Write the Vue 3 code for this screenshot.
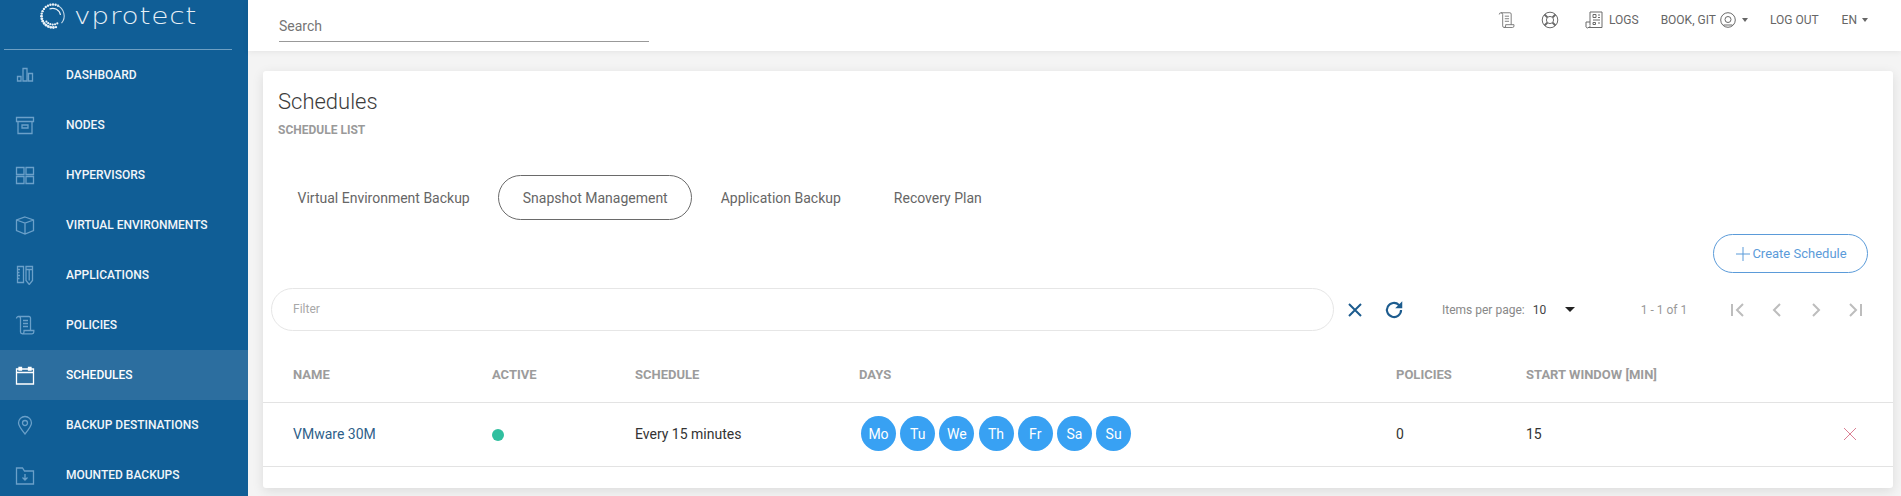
<script setup>
const navItems = [
  { label: 'DASHBOARD', d: 'M2.5 11.5h3.5v4.5H2.5z M8 3.5h4v12.5H8z M13.5 8.5h4v7.5h-4z' },
  { label: 'NODES', d: 'M1.5 2.5h17v4h-17z M3 6.5v12h14v-12 M7 10h6v3H7z' },
  { label: 'HYPERVISORS', d: 'M1.5 2.5h7.5v7H1.5z M11 2.5h7.5v7H11z M1.5 11.5h7.5v7H1.5z M11 11.5h7.5v7H11z' },
  { label: 'VIRTUAL ENVIRONMENTS', d: 'M10 2l8.5 3v10.5L10 19l-8.5-3.5V5z M1.5 5L10 8l8.5-3 M10 8v11' },
  { label: 'APPLICATIONS', d: 'M2.5 1.5h6v16h-6z M2.5 4.5H5 M2.5 7.5h2 M2.5 10.5H5 M2.5 13.5h2 M11 1.5h6.5v14l-3.25 4-3.25-4z M11 4.5h6.5 M14.2 4.5v11' },
  { label: 'POLICIES', d: 'M1.5 3.5a2 2 0 0 1 2-2H14a1.5 1.5 0 0 1 1.5 1.5v12.5 M3.5 1.5a2 2 0 0 1 2 2V17a1.8 1.8 0 0 0 1.8 1.8H17a1.8 1.8 0 0 0 1.8-1.8v-1.5H9V17a1.8 1.8 0 0 1-1.8 1.8 M8 5.5h5 M8 8.5h5 M8 11.5h5' },
  { label: 'SCHEDULES', active: true, d: 'M1.5 4h17v15h-17z M1.5 7.5h17 M4 2.500h2.500v2.500H4z M13.500 2.500H16v2.500h-2.500z' },
  { label: 'BACKUP DESTINATIONS', d: 'M10 19C6 14 3.5 11 3.5 8a6.5 6.5 0 0 1 13 0c0 3-2.5 6-6.5 11z M10 5.5a2.5 2.5 0 1 1 0 5 2.5 2.5 0 0 1 0-5z' },
  { label: 'MOUNTED BACKUPS', d: 'M1.5 3h6l2 3h9v13h-17z M10 9v6 M7.5 12.5L10 15l2.5-2.5' }
]

const tabs = ['Virtual Environment Backup', 'Snapshot Management', 'Application Backup', 'Recovery Plan']
const days = ['Mo', 'Tu', 'We', 'Th', 'Fr', 'Sa', 'Su']
const columns = ['NAME', 'ACTIVE', 'SCHEDULE', 'DAYS', 'POLICIES', 'START WINDOW [MIN]']

// dotted ring of the logo: runs from the top round the left side to the bottom
const ringDots = []
for (let a = 75; a <= 300; a += 13) {
  const rad = (a * Math.PI) / 180
  ringDots.push({ x: 13 + 11.5 * Math.cos(rad), y: 13 + 11.5 * Math.sin(rad), r: a > 80 && a < 190 ? 1.4 : 1.2 })
}
for (let a = 60; a <= 140; a += 16) {
  const rad = (a * Math.PI) / 180
  ringDots.push({ x: 13 + 8.6 * Math.cos(rad), y: 13 + 8.6 * Math.sin(rad), r: 1.1 })
}
</script>

<template>
  <div class="app-shell">
    <aside class="sidebar">
      <div class="logo">
        <svg class="logo-mark" width="26" height="26" viewBox="0 0 26 26" fill="none">
          <circle v-for="(dot, i) in ringDots" :key="i" :cx="dot.x" :cy="dot.y" :r="dot.r" fill="#e8f1f7" />
          <path d="M17 2.200a11.500 11.500 0 0 1 4.500 18" stroke="#c4d9e9" stroke-width="1.100" />
          <path d="M9.500 6a8 8 0 0 1 11 6" stroke="#e8f1f7" stroke-width="1.200" />
        </svg>
        <span class="logo-text">vprotect</span>
      </div>
      <nav class="nav">
        <a v-for="item in navItems" :key="item.label" class="nav-item" :class="{ active: item.active }">
          <svg class="nav-icon" width="20" height="20" viewBox="0 0 20 20" fill="none">
            <path :d="item.d" />
          </svg>
          <span>{{ item.label }}</span>
        </a>
      </nav>
    </aside>

    <div class="main">
      <header class="topbar">
        <div class="search">Search</div>
        <div class="top-actions">
          <svg class="top-icon policy" width="17" height="18" viewBox="0 0 20 20" fill="none">
            <path d="M1.500 3.500a2 2 0 0 1 2-2H14a1.500 1.500 0 0 1 1.500 1.500v12.500 M3.500 1.500a2 2 0 0 1 2 2V17a1.800 1.800 0 0 0 1.800 1.800H17a1.800 1.800 0 0 0 1.800-1.800v-1.500H9V17a1.800 1.800 0 0 1-1.800 1.800 M8 5.500h5 M8 8.500h5 M8 11.500h5" />
          </svg>
          <svg class="top-icon help" width="18" height="18" viewBox="0 0 18 18" fill="none">
            <circle cx="9" cy="9" r="7.800" />
            <circle cx="9" cy="9" r="3.600" />
            <path d="M3.500 3.500L6.400 6.400 M14.500 3.500L11.600 6.400 M3.500 14.500L6.400 11.600 M14.500 14.500L11.600 11.600" stroke-width="2" />
          </svg>
          <svg class="top-icon logs" width="18" height="18" viewBox="0 0 18 18" fill="none">
            <path d="M5 14V1h12v15.500H3 M5 14.500a1.500 1.500 0 0 1-1.500 2A1.500 1.500 0 0 1 1 15v-4h4 M8 3.500h3v3H8z M13 4h2 M13 6.500h2 M8 9h7 M8 11.500h2.500v2H8z M13 12h2" />
          </svg>
          <span class="top-link logs-link">LOGS</span>
          <span class="top-link user-link">BOOK, GIT</span>
          <svg class="top-icon user" width="16" height="16" viewBox="0 0 16 16" fill="none">
            <circle cx="8" cy="8" r="7.300" />
            <circle cx="8" cy="7.500" r="3" />
            <path d="M3.500 13h9" />
          </svg>
          <i class="caret user-caret"></i>
          <span class="top-link logout-link">LOG OUT</span>
          <span class="top-link lang-link">EN</span>
          <i class="caret lang-caret"></i>
        </div>
      </header>

      <div class="content">
        <section class="card">
          <div class="card-head">
            <h1>Schedules</h1>
            <p>SCHEDULE LIST</p>
          </div>

          <div class="tabs">
            <button v-for="(tab, i) in tabs" :key="tab" class="tab" :class="{ selected: i === 1 }">{{ tab }}</button>
          </div>

          <div class="actions">
            <button class="create-btn">
              <svg width="14" height="14" viewBox="0 0 14 14" fill="none"><path d="M7 0v14 M0 7h14" stroke="#5b9bd9" /></svg>
              Create Schedule
            </button>
          </div>

          <div class="filter-row">
            <div class="filter">Filter</div>
            <svg class="clear-icon" width="14" height="14" viewBox="0 0 14 14" fill="none"><path d="M1 1l12 12 M13 1L1 13" /></svg>
            <svg class="refresh-icon" width="20" height="20" viewBox="0 0 17 17" fill="none">
              <path d="M14.500 8.500a6 6 0 1 1-1.800-4.300L14.500 6" />
              <path class="arrow-head" d="M15.500 1v6h-6z" />
            </svg>
            <span class="per-page-label">Items per page:</span>
            <span class="per-page-value">10</span>
            <i class="per-page-caret"></i>
            <span class="range">1 - 1 of 1</span>
            <div class="pager">
              <svg width="16" height="16" viewBox="0 0 16 16" fill="none"><path d="M2 2v12 M13 2L7 8l6 6" /></svg>
              <svg width="16" height="16" viewBox="0 0 16 16" fill="none"><path d="M11 2L5 8l6 6" /></svg>
              <svg width="16" height="16" viewBox="0 0 16 16" fill="none"><path d="M5 2l6 6-6 6" /></svg>
              <svg width="16" height="16" viewBox="0 0 16 16" fill="none"><path d="M3 2l6 6-6 6 M14 2v12" /></svg>
            </div>
          </div>

          <div class="table-row table-head">
            <div v-for="col in columns" :key="col">{{ col }}</div>
            <div></div>
          </div>
          <div class="table-row table-body">
            <div class="name">VMware 30M</div>
            <div><span class="dot"></span></div>
            <div>Every 15 minutes</div>
            <div class="days">
              <span v-for="day in days" :key="day" class="day">{{ day }}</span>
            </div>
            <div>0</div>
            <div>15</div>
            <div class="remove">
              <svg width="14" height="14" viewBox="0 0 14 14" fill="none"><path d="M1 1l12 12 M13 1L1 13" stroke="#db7f93" /></svg>
            </div>
          </div>
        </section>
      </div>
    </div>
  </div>
</template>

<style>
html, body {
  margin: 0;
  height: 100%;
  overflow: hidden;
}
</style>

<style scoped>
.app-shell {
  display: flex;
  height: 496px;
  overflow: hidden;
  font-family: Roboto, "Liberation Sans", sans-serif;
  background: #f4f4f4;
}

.sidebar {
  width: 248px;
  flex-shrink: 0;
  background: #105e96;
}

.logo {
  display: flex;
  align-items: center;
  height: 50px;
  margin: 0 16px 0 4px;
  padding: 0 0 17px 36px;
  box-sizing: border-box;
  border-bottom: 1px solid #6d9fc3;
  width: 228px;
}

.logo-mark {
  flex-shrink: 0;
}

.logo-text {
  margin-left: 8px;
  color: #e6eff6;
  font-family: "DejaVu Sans", sans-serif;
  font-weight: 200;
  font-size: 23px;
  line-height: 26px;
  letter-spacing: 0.6px;
  transform: scaleX(1.22);
  transform-origin: left center;
}

.nav-item {
  display: flex;
  align-items: center;
  height: 50px;
  padding-left: 15px;
  color: #f2f6fa;
  font-size: 12px;
  font-weight: 500;
}

.nav-item.active {
  background: #2c6e9f;
  color: #fff;
}

.nav-icon {
  margin-right: 31px;
  flex-shrink: 0;
}

.nav-icon path {
  stroke: #6ba0c9;
  stroke-width: 1.3;
}

.nav-item.active .nav-icon path {
  stroke: #fff;
}

.main {
  flex: 1;
  min-width: 0;
  display: flex;
  flex-direction: column;
}

.topbar {
  height: 51px;
  flex-shrink: 0;
  display: flex;
  align-items: flex-start;
  justify-content: space-between;
  background: #fff;
  box-shadow: 0 1px 6px rgba(0, 0, 0, 0.07);
  position: relative;
}

.search {
  width: 370px;
  margin: 18px 0 0 31px;
  padding-bottom: 6px;
  border-bottom: 1px solid #999;
  color: #757575;
  font-size: 14px;
  line-height: 17px;
}

.top-actions {
  display: flex;
  align-items: center;
  height: 40px;
  margin-right: 33px;
  color: #666;
  font-size: 12px;
}

.top-icon path,
.top-icon circle {
  stroke: #6a6a6a;
}

.help {
  margin-left: 26px;
}

.logs {
  margin-left: 26px;
}

.logs-link {
  margin-left: 6px;
}

.user-link {
  margin-left: 22px;
}

.user {
  margin-left: 4px;
}

.logout-link {
  margin-left: 22px;
}

.lang-link {
  margin-left: 23px;
}

.caret {
  width: 0;
  height: 0;
  margin-left: 4px;
  border-left: 3.5px solid transparent;
  border-right: 3.5px solid transparent;
  border-top: 4px solid #666;
}

.user-caret {
  margin-left: 6px;
}

.lang-caret {
  margin-left: 5px;
}

.content {
  padding: 20px 8px 0 15px;
}

.card {
  height: 417px;
  box-sizing: border-box;
  background: #fff;
  border-radius: 3px;
  box-shadow: 0 3px 12px rgba(0, 0, 0, 0.1);
}

.card-head {
  padding: 18px 0 0 15px;
}

.card-head h1 {
  margin: 0;
  color: #3c3c3c;
  font-size: 22px;
  font-weight: 300;
  line-height: 26px;
}

.card-head p {
  margin: 7px 0 0;
  color: #9a9a9a;
  font-size: 12px;
  font-weight: 700;
  line-height: 16px;
}

.tabs {
  display: flex;
  gap: 4px;
  margin: 37px 0 0 10px;
}

.tab {
  height: 45px;
  padding: 0 23.5px;
  border: 1px solid transparent;
  border-radius: 23px;
  background: none;
  color: #666;
  font: 400 14px Roboto, sans-serif;
}

.tab.selected {
  border-color: #6a6a6a;
}

.actions {
  display: flex;
  justify-content: flex-end;
  margin: 14px 25px 0 0;
}

.create-btn {
  display: flex;
  align-items: center;
  justify-content: center;
  gap: 2px;
  width: 155px;
  height: 39px;
  padding-left: 8px;
  border: 1px solid #5b9bd9;
  border-radius: 20px;
  background: #fff;
  color: #5b9bd9;
  font: 400 13px Roboto, sans-serif;
}

.filter-row {
  display: flex;
  align-items: center;
  height: 43px;
  margin: 15px 0 0 8px;
}

.filter {
  width: 1063px;
  height: 43px;
  box-sizing: border-box;
  padding: 0 0 2px 21px;
  display: flex;
  align-items: center;
  border: 1px solid #e6e6e6;
  border-radius: 22px;
  color: #a8a8a8;
  font-size: 12px;
}

.clear-icon {
  margin-left: 14px;
}

.clear-icon path {
  stroke: #1d5c8e;
  stroke-width: 2;
}

.refresh-icon {
  margin-left: 22px;
}

.refresh-icon path {
  stroke: #1d5c8e;
  stroke-width: 1.8;
}

.refresh-icon .arrow-head {
  fill: #1d5c8e;
  stroke: none;
}

.per-page-label {
  margin-left: 38px;
  color: #888;
  font-size: 12px;
}

.per-page-value {
  margin-left: 8px;
  color: #444;
  font-size: 12px;
}

.per-page-caret {
  width: 0;
  height: 0;
  margin-left: 19px;
  border-left: 5px solid transparent;
  border-right: 5px solid transparent;
  border-top: 5px solid #222;
}

.range {
  margin-left: 65.5px;
  color: #999;
  font-size: 12px;
}

.pager {
  display: flex;
  gap: 23px;
  margin-left: 43px;
}

.pager path {
  stroke: #bdbdbd;
  stroke-width: 2;
}

.table-row {
  display: grid;
  grid-template-columns: 199px 143px 224px 537px 130px 300px 48px;
  padding-left: 30px;
  border-bottom: 1px solid #e3e3e3;
  align-items: center;
}

.table-head {
  height: 72px;
  box-sizing: border-box;
  padding-top: 16px;
  color: #9c9c9c;
  font-size: 13px;
  font-weight: 700;
}

.table-body {
  height: 64px;
  box-sizing: border-box;
  padding-bottom: 2px;
  color: #333;
  font-size: 14px;
}

.name {
  color: #2f5f8a;
}

.dot {
  display: block;
  width: 12px;
  height: 12px;
  margin-top: 2px;
  border-radius: 50%;
  background: #30bf9f;
}

.days {
  display: flex;
  gap: 4.2px;
  margin-left: 2px;
}

.day {
  display: flex;
  align-items: center;
  justify-content: center;
  width: 35px;
  height: 35px;
  border-radius: 50%;
  background: #38a1f3;
  color: #fff;
  font-size: 14px;
}

.remove {
  display: flex;
  justify-content: center;
}
</style>
